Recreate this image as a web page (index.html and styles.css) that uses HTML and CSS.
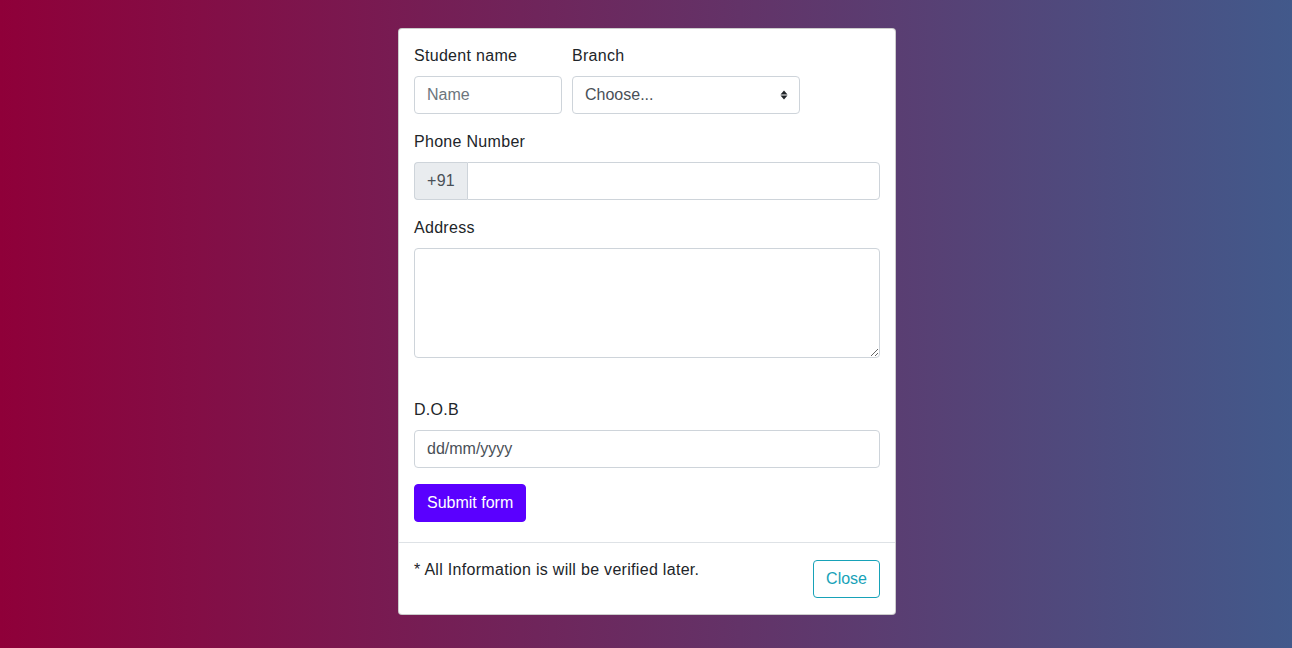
FILE: index.html
```html
<!DOCTYPE html>
<html lang="en">
<head>
<meta charset="utf-8">
<title>Student Form</title>
<link rel="stylesheet" href="styles.css">
</head>
<body>
<div class="page">
  <div class="card">
    <form class="card-body">
      <div class="row">
        <div class="group col-name">
          <label class="label" for="name">Student name</label>
          <input class="control" id="name" type="text" placeholder="Name">
        </div>
        <div class="group col-branch">
          <label class="label" for="branch">Branch</label>
          <select class="control select" id="branch">
            <option>Choose...</option>
          </select>
        </div>
      </div>
      <div class="group">
        <label class="label" for="phone">Phone Number</label>
        <div class="input-group">
          <span class="prepend">+91</span>
          <input class="control grow" id="phone" type="text">
        </div>
      </div>
      <div class="group">
        <label class="label" for="addr">Address</label>
        <textarea class="control area" id="addr" rows="4"></textarea>
      </div>
      <div class="group dob">
        <label class="label" for="dob">D.O.B</label>
        <input class="control value" id="dob" type="text" value="dd/mm/yyyy">
      </div>
      <button class="btn btn-primary" type="button">Submit form</button>
    </form>
    <div class="card-footer">
      <p class="note">* All Information is will be verified later.</p>
      <button class="btn btn-outline" type="button">Close</button>
    </div>
  </div>
</div>
</body>
</html>
```

FILE: styles.css
```css
* { box-sizing: border-box; }
html, body { margin: 0; padding: 0; }
body {
  height: 648px;
  overflow: hidden;
  background: linear-gradient(to right, #8f0039, #42598b);
  font-family: "Liberation Sans", Arial, sans-serif;
  font-size: 16px;
  line-height: 1.5;
  letter-spacing: 0.3px;
  color: #212529;
}
.page {
  display: flex;
  justify-content: center;
  padding: 28px 0 0 2px;
}
.card {
  width: 498px;
  background: #fff;
  border: 1px solid rgba(0,0,0,.2);
  border-radius: 4px;
  display: flex;
  flex-direction: column;
}
.card-body {
  padding: 15px 15px 20px;
  margin: 0;
}
.row {
  display: flex;
  gap: 10px;
}
.col-name { width: 148px; }
.col-branch { width: 228px; }
.group { margin-bottom: 16px; }
.dob { margin-top: 40px; }
.label {
  display: block;
  margin-bottom: 8px;
}
.control {
  display: block;
  width: 100%;
  height: 38px;
  padding: 6px 12px;
  font: inherit;
  letter-spacing: normal;
  line-height: 1.5;
  color: #495057;
  background: #fff;
  border: 1px solid #ced4da;
  border-radius: 4px;
  outline: none;
}
.control::placeholder { color: #6c757d; opacity: 1; }
.select {
  appearance: none;
  -webkit-appearance: none;
  background-image: url("data:image/svg+xml,%3Csvg xmlns='http://www.w3.org/2000/svg' width='8' height='12' viewBox='0 0 8 12'%3E%3Cpath d='M4 1.5 7.5 5.5H.5zM4 10.5.5 6.5h7z' fill='%23212529'/%3E%3C/svg%3E");
  background-repeat: no-repeat;
  background-position: right 11px center;
  background-size: 8px 12px;
  padding-right: 28px;
}
.input-group { display: flex; }
.prepend {
  display: flex;
  align-items: center;
  padding: 6px 12px;
  height: 38px;
  color: #495057;
  background: #e9ecef;
  border: 1px solid #ced4da;
  border-radius: 4px 0 0 4px;
  border-right: 0;
}
.grow {
  flex: 1;
  border-radius: 0 4px 4px 0;
}
.area {
  height: 110px;
  resize: vertical;
}
.btn {
  font: inherit;
  letter-spacing: normal;
  line-height: 1.5;
  padding: 6px 12px;
  border-radius: 4px;
  border: 1px solid transparent;
  cursor: pointer;
}
.btn-primary {
  background: #5a00ff;
  border-color: #5a00ff;
  color: #fff;
}
.btn-outline {
  background: transparent;
  border-color: #17a2b8;
  color: #17a2b8;
  margin: 4px;
}
.card-footer {
  display: flex;
  justify-content: space-between;
  align-items: flex-start;
  padding: 13px 11px 12px 12px;
  border-top: 1px solid #dee2e6;
}
.note { margin: 2px 4px 4px 3px; }
```
